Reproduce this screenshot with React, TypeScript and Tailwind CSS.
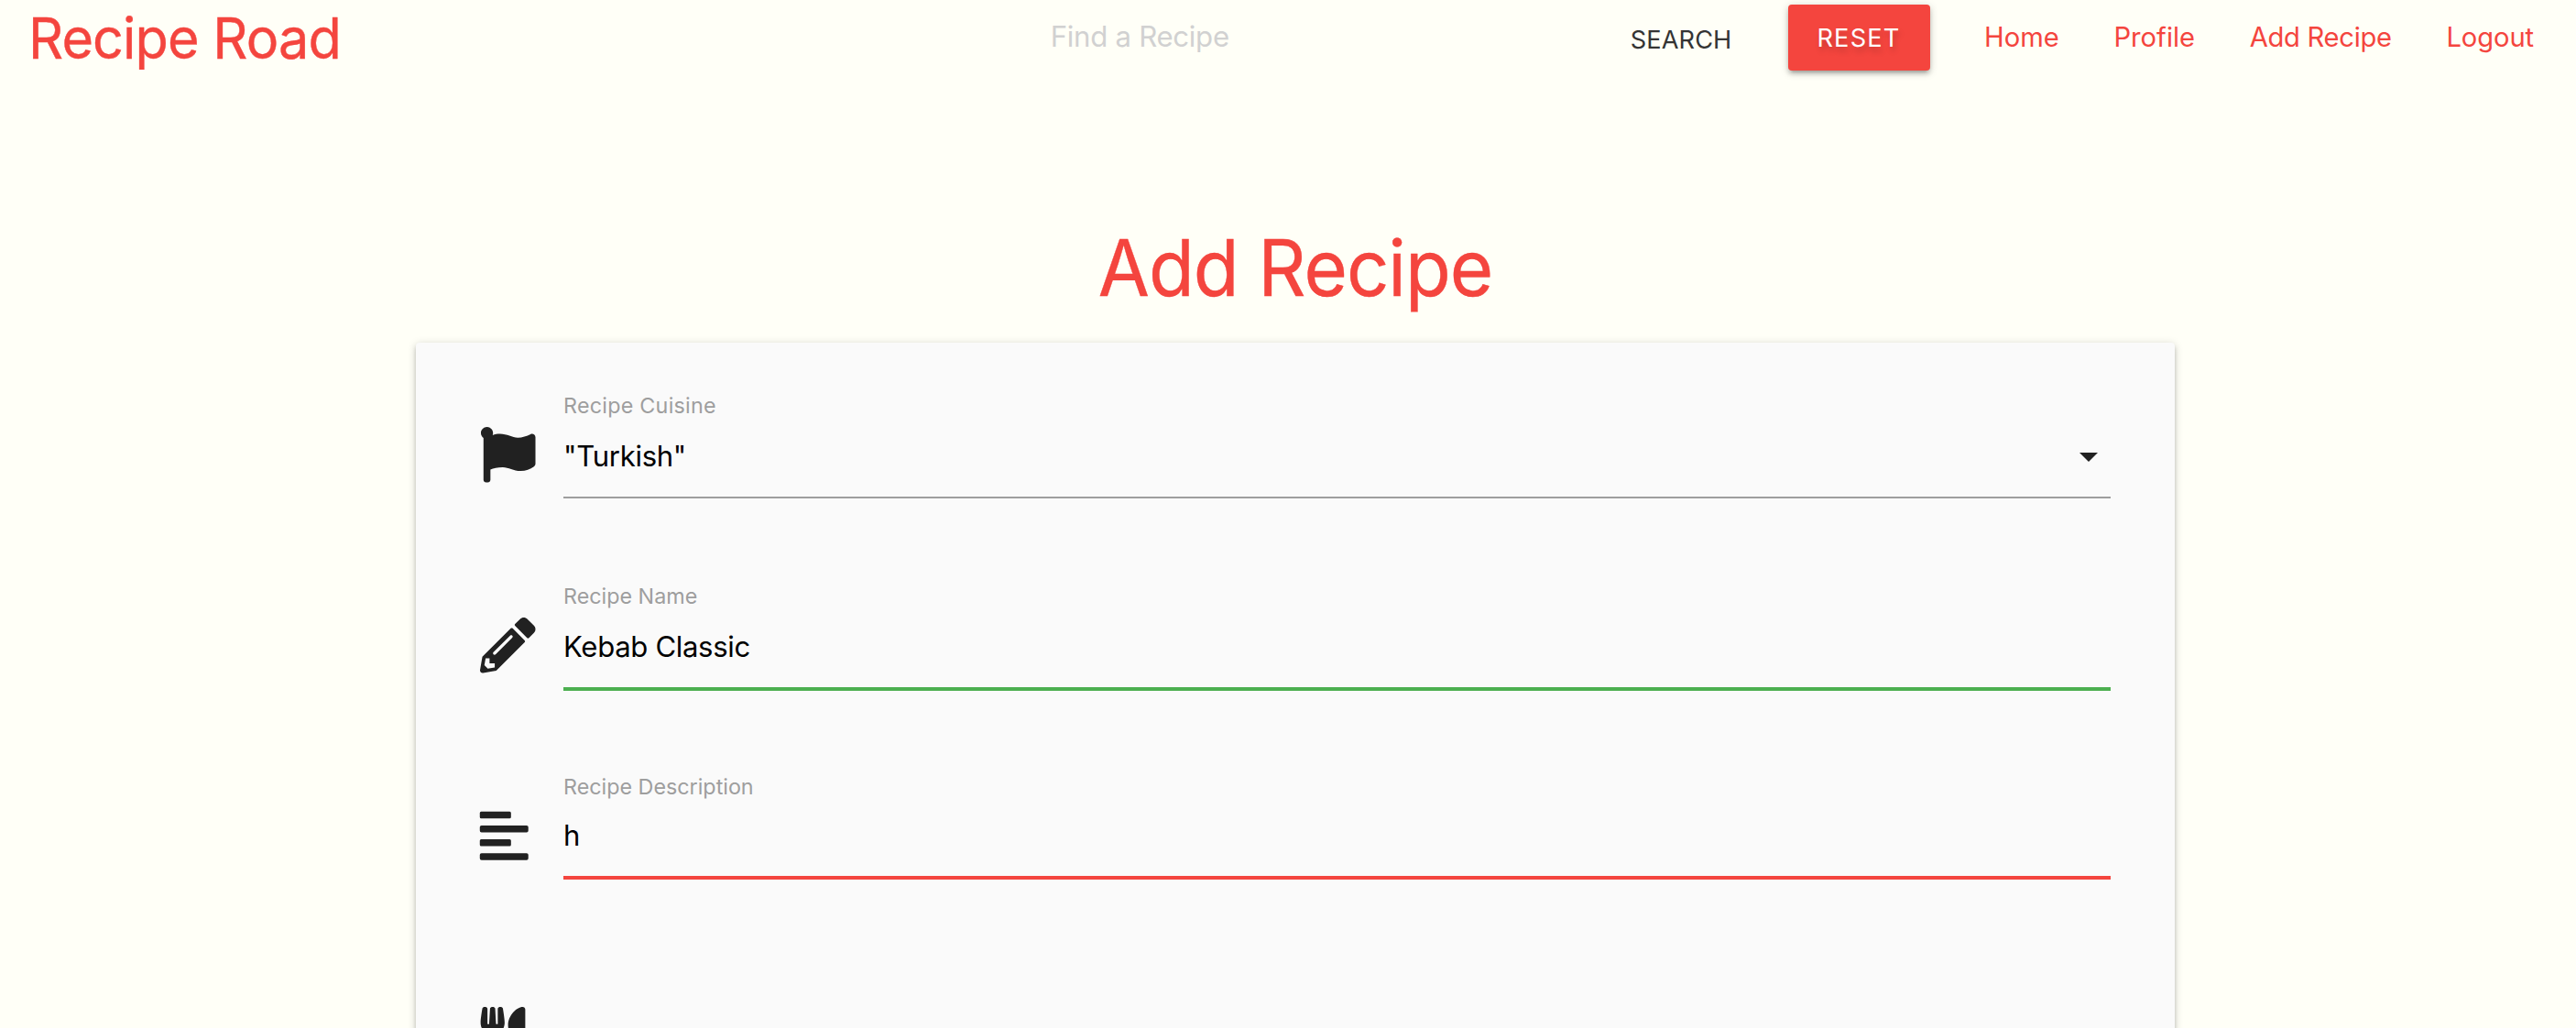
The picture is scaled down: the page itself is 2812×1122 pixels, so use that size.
import type { ReactNode } from 'react';
import { FaAlignLeft, FaFlag, FaPencilAlt, FaUtensils } from 'react-icons/fa';

function Header() {
  return (
    <header className="flex h-[112px] shrink-0 items-start justify-between pr-[46px] pl-[31px] text-[#f4453e]">
      <a className="origin-left scale-x-[0.96] text-[61.8px] leading-[83px] tracking-[-0.95px] [-webkit-text-stroke:0.4px]">Recipe Road</a>
      <div className="flex items-start gap-[59.6px] text-[29.2px] leading-[81px]">
        <div className="mr-[1.5px] flex items-start">
          <span className="w-[633px] text-[31.2px] leading-[80px] tracking-[-0.3px] text-[#d1d1d1]">Find a Recipe</span>
          <span className="text-[27.2px] leading-[87px] tracking-[0.1px] text-[#343434]">SEARCH</span>
        </div>
        <button className="mt-[5px] h-[72px] w-[155px] rounded-[4px] bg-[#f4453e] text-[27.2px] leading-[73px] tracking-[1.2px] text-white shadow-[0_4px_4px_0_rgba(0,0,0,0.14),0_6px_2px_-4px_rgba(0,0,0,0.12),0_2px_10px_0_rgba(0,0,0,0.2)] [text-shadow:2px_5px_6px_rgba(0,0,0,0.18)]">
          RESET
        </button>
        <a>Home</a>
        <a>Profile</a>
        <a className="tracking-[-0.3px]">Add Recipe</a>
        <a className="tracking-[-0.1px]">Logout</a>
      </div>
    </header>
  );
}

function Field({ icon, label, labelClass, className, children }: {
  icon: ReactNode;
  label: string;
  labelClass: string;
  className: string;
  children: ReactNode;
}) {
  return (
    <div className={`flex items-start ${className}`}>
      <div className="mt-[39px] w-[91px] shrink-0 text-[60.5px] text-[#212121]">{icon}</div>
      <div className="min-w-0 flex-1">
        <div className={`text-[23.3px] leading-[31px] text-[#9e9e9e] ${labelClass}`}>{label}</div>
        {children}
      </div>
    </div>
  );
}

export default function App() {
  return (
    <div className="flex h-[1122px] w-[2812px] flex-col overflow-hidden bg-[#fffff7] font-['Inter',sans-serif] whitespace-nowrap">
      <Header />
      <main className="flex flex-1 flex-col pl-4">
        <h1 className="mt-[120px] h-[142px] scale-x-[0.96] text-center text-[84.8px] leading-[120px] tracking-[-1.1px] text-[#f4453e] [-webkit-text-stroke:0.4px]">Add Recipe</h1>
        <form className="mx-auto h-[800px] w-[1920px] shrink-0 rounded-[4px] bg-[#fafafa] pt-[53px] pr-[70px] pl-[70px] shadow-[0_4px_4px_0_rgba(0,0,0,0.14),0_6px_2px_-4px_rgba(0,0,0,0.12),0_2px_10px_0_rgba(0,0,0,0.2)]">
          <Field icon={<FaFlag />} label="Recipe Cuisine" labelClass="h-[39px] tracking-[0.25px]" className="h-[208px]">
            <div className="flex items-start justify-between border-b-2 border-[#9e9e9e] pb-3 text-[31.1px] leading-[64px] tracking-[-0.3px] text-black">
              <span>"Turkish"</span>
              <svg className="mt-2 size-12" viewBox="0 0 24 24" fill="#212121">
                <path d="M7 10l5 5 5-5z" />
              </svg>
            </div>
          </Field>
          <Field icon={<FaPencilAlt />} label="Recipe Name" labelClass="h-[39px]" className="h-[208px]">
            <div className="border-b-4 border-[#4caf50] pb-3 text-[31.1px] leading-[64px] tracking-[-0.33px] text-black">Kebab Classic</div>
          </Field>
          <Field icon={<FaAlignLeft className="-ml-[3.8px]" />} label="Recipe Description" labelClass="h-[37px]" className="h-[217px]">
            <div className="border-b-4 border-[#f4453e] pb-3 text-[31.1px] leading-[64px] text-black">h</div>
          </Field>
          <div className="flex items-start pt-[39px]">
            <FaUtensils className="mr-[36.5px] -ml-[5.5px] text-[60px] text-[#212121]" />
            <span className="text-[31.1px] leading-[71px] text-[#9e9e9e]">Serves</span>
          </div>
        </form>
      </main>
    </div>
  );
}
